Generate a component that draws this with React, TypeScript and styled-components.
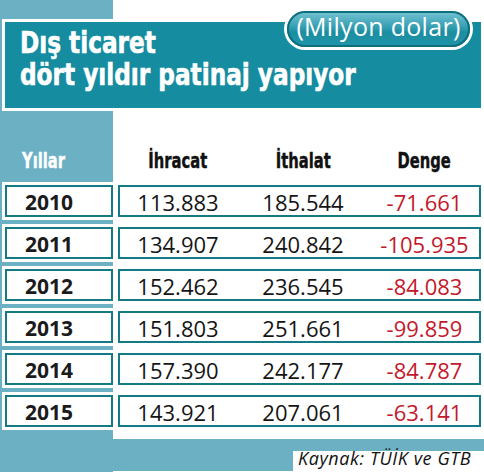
import React from 'react';
import styled, { createGlobalStyle } from 'styled-components';

const GlobalStyle = createGlobalStyle`
  html, body {
    margin: 0;
    padding: 0;
    background: #ffffff;
  }
  body {
    font-family: "Open Sans", "DejaVu Sans", sans-serif;
  }
`;

const LIGHT = '#6bb0c3';
const TEAL = '#168ca0';
const LINE = '#147b85';

const Page = styled.div`
  position: relative;
  width: 484px;
  height: 472px;
  padding-top: 22px;
  box-sizing: border-box;
  // light blue column behind the years
  background: linear-gradient(to right, ${LIGHT} 0 113px, #ffffff 113px);
`;

const TitleBox = styled.div`
  margin: 0 3px 0 5px;
  height: 86px;
  padding: 5px 0 0 15px;
  box-sizing: border-box;
  background: ${TEAL};
  box-shadow: 0 0 0 3px #ffffff;
`;

const TitleLine = styled.div`
  font-family: "DejaVu Sans Condensed", "DejaVu Sans", sans-serif;
  font-weight: bold;
  font-size: 30px;
  line-height: 32px;
  color: #ffffff;
  -webkit-text-stroke: 0.6px #ffffff;
  white-space: nowrap;
  transform: scaleX(0.86);
  transform-origin: left center;
`;

const Badge = styled.div`
  position: absolute;
  top: 11px;
  left: 287px;
  width: 183px;
  height: 36px;
  box-sizing: border-box;
  border: 2px solid #0d6e7e;
  border-radius: 20px;
  box-shadow: 0 0 0 3px #ffffff;
  background: linear-gradient(180deg, #6fc0cf 0%, #3aa2b5 40%, #1c8ea2 60%, #1f93a7 100%);
  color: #ffffff;
  font-size: 25px;
  line-height: 26px;
  text-align: center;
  letter-spacing: 0.3px;
`;

const HeaderRow = styled.div`
  display: grid;
  grid-template-columns: 115px 116px 134px 109px;
  align-items: end;
  height: 77px;
  margin-left: 5px;
  padding-bottom: 12px;
  box-sizing: border-box;
`;

const HeadCell = styled.div<{ $light?: boolean }>`
  font-family: "DejaVu Sans Condensed", "DejaVu Sans", sans-serif;
  font-weight: bold;
  font-size: 21px;
  line-height: 24px;
  color: ${(p) => (p.$light ? '#ffffff' : '#111111')};
  -webkit-text-stroke: 0.4px ${(p) => (p.$light ? '#ffffff' : '#111111')};
  text-align: ${(p) => (p.$light ? 'left' : 'center')};
  padding-left: ${(p) => (p.$light ? '17px' : '0')};
  white-space: nowrap;
  span {
    display: inline-block;
    transform: scaleX(0.78);
    transform-origin: ${(p) => (p.$light ? 'left' : 'center')} center;
  }
`;

const Rows = styled.div`
  display: flex;
  flex-direction: column;
  gap: 10px;
  margin-left: 5px;
`;

const Row = styled.div`
  display: grid;
  grid-template-columns: 108px 363px;
  column-gap: 5px;
`;

const Box = styled.div`
  height: 32px;
  box-sizing: border-box;
  border: 2px solid ${LINE};
  background: #ffffff;
  box-shadow: 0 0 0 3px #ffffff;
  padding-top: 1px;
`;

const YearBox = styled(Box)`
  padding-left: 18px;
  font-weight: bold;
  font-size: 21px;
  line-height: 28px;
  color: #1b1b1b;
`;

const DataBox = styled(Box)`
  display: grid;
  grid-template-columns: 116px 134px 109px;
`;

const Value = styled.div<{ $neg?: boolean }>`
  text-align: center;
  font-size: 22px;
  line-height: 28px;
  color: ${(p) => (p.$neg ? '#c3192c' : '#151515')};
  white-space: nowrap;
`;

const Footer = styled.div`
  margin-top: 12px;
  height: 32px;
  background: ${LIGHT};
  display: flex;
  justify-content: flex-end;
  align-items: flex-end;
`;

const Source = styled.div`
  width: 191px;
  height: 20px;
  box-sizing: border-box;
  padding-left: 5px;
  background: #ffffff;
  font-style: italic;
  font-size: 18px;
  line-height: 14px;
  color: #111111;
  letter-spacing: 0.6px;
  white-space: nowrap;
`;

const data = [
  { year: '2010', exp: '113.883', imp: '185.544', bal: '-71.661' },
  { year: '2011', exp: '134.907', imp: '240.842', bal: '-105.935' },
  { year: '2012', exp: '152.462', imp: '236.545', bal: '-84.083' },
  { year: '2013', exp: '151.803', imp: '251.661', bal: '-99.859' },
  { year: '2014', exp: '157.390', imp: '242.177', bal: '-84.787' },
  { year: '2015', exp: '143.921', imp: '207.061', bal: '-63.141' },
];

export default function App() {
  return (
    <>
      <GlobalStyle />
      <Page>
        <Badge>(Milyon dolar)</Badge>
        <TitleBox>
          <TitleLine>Dış ticaret</TitleLine>
          <TitleLine>dört yıldır patinaj yapıyor</TitleLine>
        </TitleBox>
        <HeaderRow>
          <HeadCell $light><span>Yıllar</span></HeadCell>
          <HeadCell><span>İhracat</span></HeadCell>
          <HeadCell><span>İthalat</span></HeadCell>
          <HeadCell><span>Denge</span></HeadCell>
        </HeaderRow>
        <Rows>
          {data.map((d) => (
            <Row key={d.year}>
              <YearBox>{d.year}</YearBox>
              <DataBox>
                <Value>{d.exp}</Value>
                <Value>{d.imp}</Value>
                <Value $neg>{d.bal}</Value>
              </DataBox>
            </Row>
          ))}
        </Rows>
        <Footer>
          <Source>Kaynak: TÜİK ve GTB</Source>
        </Footer>
      </Page>
    </>
  );
}
